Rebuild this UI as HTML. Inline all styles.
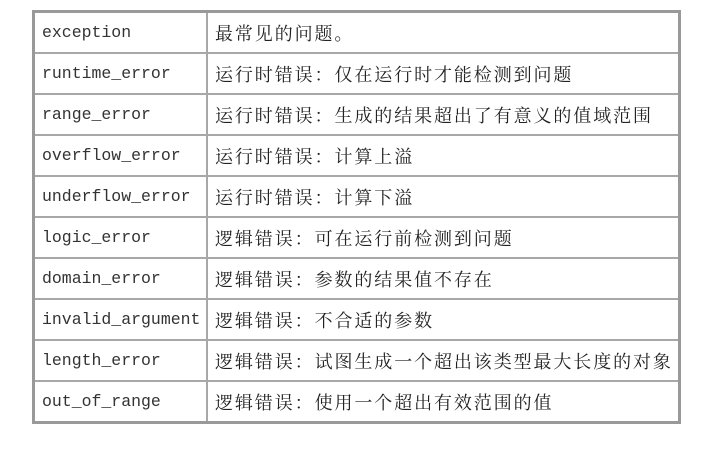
<!DOCTYPE html>
<html><head><meta charset="utf-8"><style>
body{margin:0;background:#fff;width:713px;height:450px;overflow:hidden}
table{position:absolute;left:32px;top:10px;border-collapse:collapse;border:3px solid #999}
td{border:2px solid #a8a8a8;height:39px;padding:0 0 0 7px;vertical-align:middle;white-space:nowrap;color:#222}
td.a{width:164px;font-family:"Liberation Mono",monospace;font-size:16.5px;color:#333}
td.b{width:463px;font-family:"Noto Serif CJK SC","Liberation Serif",serif;font-size:18px;letter-spacing:1.9px}
.c{display:inline-block;width:20px}
</style></head><body>
<table>
<tr><td class="a">exception</td><td class="b">最常见的问题。</td></tr>
<tr><td class="a">runtime_error</td><td class="b">运行时错误<span class="c">：</span>仅在运行时才能检测到问题</td></tr>
<tr><td class="a">range_error</td><td class="b">运行时错误<span class="c">：</span>生成的结果超出了有意义的值域范围</td></tr>
<tr><td class="a">overflow_error</td><td class="b">运行时错误<span class="c">：</span>计算上溢</td></tr>
<tr><td class="a">underflow_error</td><td class="b">运行时错误<span class="c">：</span>计算下溢</td></tr>
<tr><td class="a">logic_error</td><td class="b">逻辑错误<span class="c">：</span>可在运行前检测到问题</td></tr>
<tr><td class="a">domain_error</td><td class="b">逻辑错误<span class="c">：</span>参数的结果值不存在</td></tr>
<tr><td class="a">invalid_argument</td><td class="b">逻辑错误<span class="c">：</span>不合适的参数</td></tr>
<tr><td class="a">length_error</td><td class="b">逻辑错误<span class="c">：</span>试图生成一个超出该类型最大长度的对象</td></tr>
<tr><td class="a">out_of_range</td><td class="b">逻辑错误<span class="c">：</span>使用一个超出有效范围的值</td></tr>
</table>
</body></html>
